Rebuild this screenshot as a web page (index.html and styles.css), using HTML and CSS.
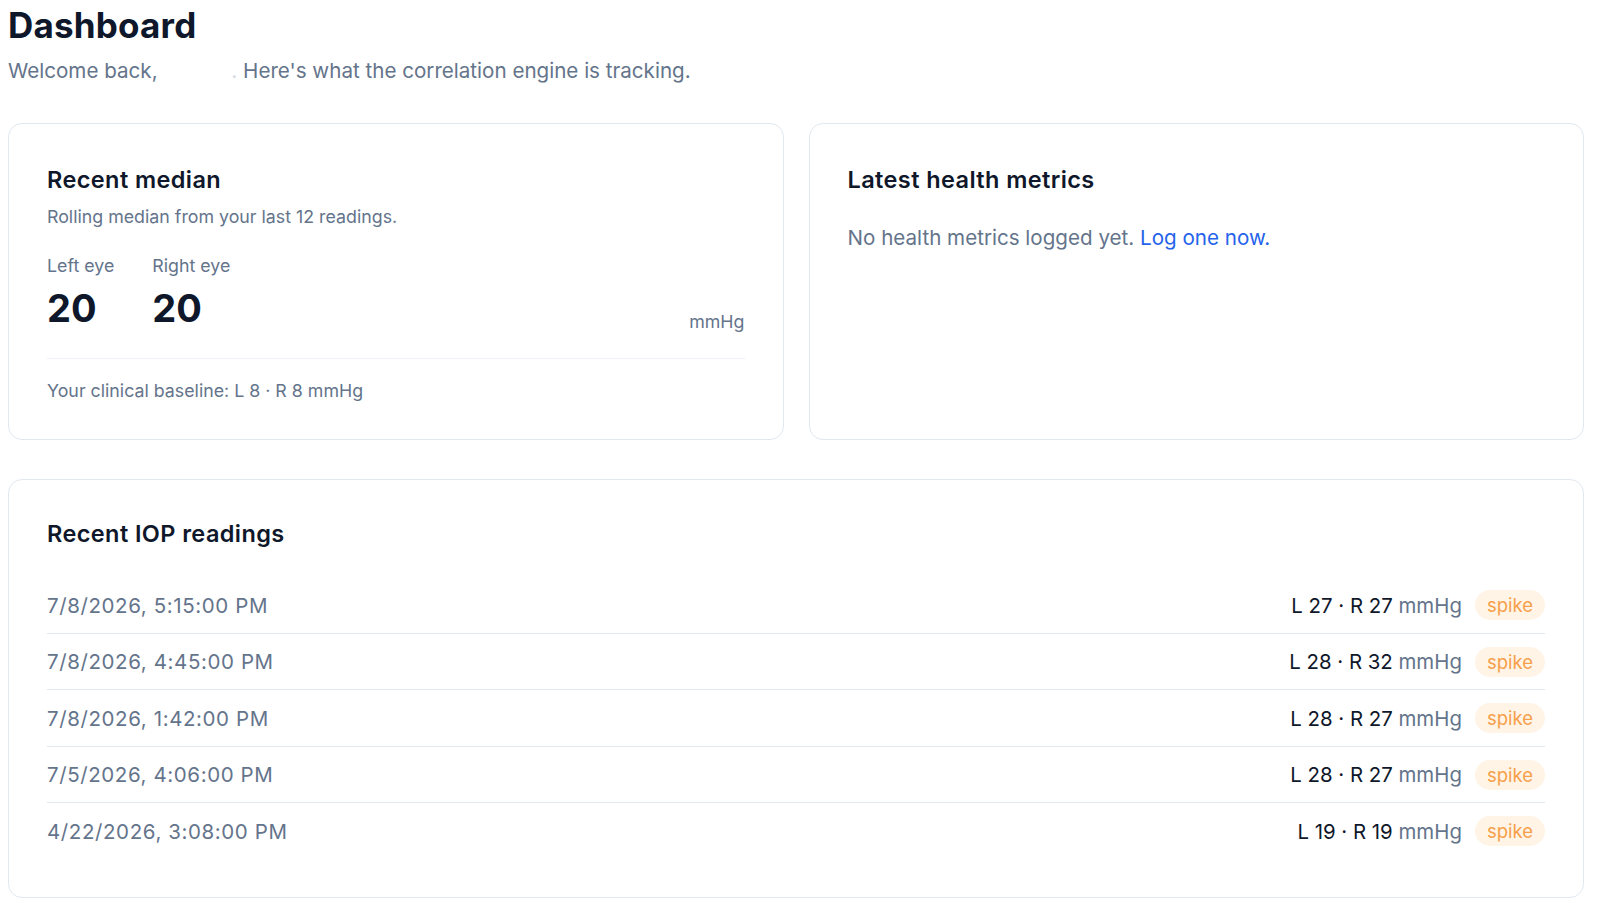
FILE: index.html
```html
<!DOCTYPE html>
<html lang="en">
<head>
    <meta charset="UTF-8">
    <meta name="viewport" content="width=device-width, initial-scale=1.0">
    <title>Dashboard</title>
    <link rel="stylesheet" href="styles.css">
</head>
<body>
    <main class="page">
        <header class="page-header">
            <h1>Dashboard</h1>
            <p class="welcome">Welcome back, <span class="user-name"></span><span class="faint">.</span> Here's what the correlation engine is tracking.</p>
        </header>

        <div class="top-grid">
            <section class="card">
                <h2 class="card-title">Recent median</h2>
                <p class="card-sub">Rolling median from your last 12 readings.</p>
                <div class="median-row">
                    <div class="eyes">
                        <div class="eye">
                            <div class="eye-label">Left eye</div>
                            <div class="eye-value">20</div>
                        </div>
                        <div class="eye">
                            <div class="eye-label">Right eye</div>
                            <div class="eye-value">20</div>
                        </div>
                    </div>
                    <div class="unit">mmHg</div>
                </div>
                <div class="baseline">Your clinical baseline: L 8 · R 8 mmHg</div>
            </section>

            <section class="card">
                <h2 class="card-title">Latest health metrics</h2>
                <p class="empty">No health metrics logged yet. <a href="#" class="link">Log one now.</a></p>
            </section>
        </div>

        <section class="card readings">
            <h2 class="card-title">Recent IOP readings</h2>
            <ul class="reading-list">
                <li class="reading">
                    <span class="reading-date">7/8/2026, 5:15:00 PM</span>
                    <span class="reading-right">
                        <span class="reading-value">L 27 · R 27 <span class="muted">mmHg</span></span>
                        <span class="badge">spike</span>
                    </span>
                </li>
                <li class="reading">
                    <span class="reading-date">7/8/2026, 4:45:00 PM</span>
                    <span class="reading-right">
                        <span class="reading-value">L 28 · R 32 <span class="muted">mmHg</span></span>
                        <span class="badge">spike</span>
                    </span>
                </li>
                <li class="reading">
                    <span class="reading-date">7/8/2026, 1:42:00 PM</span>
                    <span class="reading-right">
                        <span class="reading-value">L 28 · R 27 <span class="muted">mmHg</span></span>
                        <span class="badge">spike</span>
                    </span>
                </li>
                <li class="reading">
                    <span class="reading-date">7/5/2026, 4:06:00 PM</span>
                    <span class="reading-right">
                        <span class="reading-value">L 28 · R 27 <span class="muted">mmHg</span></span>
                        <span class="badge">spike</span>
                    </span>
                </li>
                <li class="reading">
                    <span class="reading-date">4/22/2026, 3:08:00 PM</span>
                    <span class="reading-right">
                        <span class="reading-value">L 19 · R 19 <span class="muted">mmHg</span></span>
                        <span class="badge">spike</span>
                    </span>
                </li>
            </ul>
        </section>
    </main>
</body>
</html>
```

FILE: styles.css
```css
body {
    margin: 0;
    background-color: #fff;
    font-family: 'Inter', 'Noto Sans', sans-serif;
    color: #0f172a;
}
.page {
    padding: 8px 16px 8px 8px;
}
.page-header h1 {
    margin: 0;
    font-size: 35px;
    line-height: 34px;
    font-weight: 700;
    letter-spacing: 0.2px;
    color: #0f172a;
}
.welcome {
    margin: 15px 0 0;
    font-size: 20.6px;
    line-height: 28px;
    color: #64748b;
}
.user-name {
    display: inline-block;
    width: 68px;
}
.faint {
    color: #d5dce5;
}

.top-grid {
    display: grid;
    grid-template-columns: 1fr 1fr;
    gap: 25px;
    margin-top: 38px;
}
.card {
    border: 1px solid #e2e8f0;
    border-radius: 14px;
    padding: 39px 38px 36px;
    background: #fff;
}
.card-title {
    margin: 0;
    font-size: 23.5px;
    line-height: 34px;
    font-weight: 600;
    letter-spacing: 0.4px;
    color: #0f172a;
}
.card-sub {
    margin: 8px 0 0;
    font-size: 17.8px;
    line-height: 24px;
    color: #64748b;
}
.median-row {
    display: flex;
    justify-content: space-between;
    align-items: flex-end;
    margin-top: 25px;
    padding-bottom: 28px;
    border-bottom: 1px solid #eef2f6;
}
.eyes {
    display: flex;
    gap: 38px;
}
.eye-label {
    font-size: 17.8px;
    line-height: 24px;
    color: #64748b;
}
.eye-value {
    margin-top: 8px;
    font-size: 38px;
    line-height: 44px;
    font-weight: 700;
    color: #0f172a;
}
.unit {
    font-size: 17.8px;
    line-height: 24px;
    color: #64748b;
    margin-bottom: -4px;
}
.baseline {
    margin-top: 20px;
    font-size: 17.8px;
    line-height: 24px;
    color: #64748b;
}
.empty {
    margin: 26px 0 0;
    font-size: 20.6px;
    line-height: 30px;
    color: #64748b;
}
.link {
    color: #2563eb;
    text-decoration: none;
}

.readings {
    margin-top: 39px;
    padding-top: 37px;
    padding-bottom: 38px;
}
.reading-list {
    list-style: none;
    margin: 26px 0 0;
    padding: 0;
}
.reading {
    display: flex;
    justify-content: space-between;
    align-items: center;
    padding: 13px 0 12.5px;
    border-bottom: 1px solid #e2e8f0;
}
.reading:last-child {
    border-bottom: none;
}
.reading-date {
    font-size: 20.5px;
    letter-spacing: 0.6px;
    color: #64748b;
}
.reading-right {
    display: flex;
    align-items: center;
    gap: 13px;
}
.reading-value {
    font-size: 20.4px;
    color: #0f172a;
}
.muted {
    color: #64748b;
}
.badge {
    display: inline-block;
    height: 30px;
    line-height: 30px;
    padding: 0 12px;
    border-radius: 15px;
    background-color: #fff4e6;
    color: #f7a04a;
    font-size: 18.5px;
}
```
